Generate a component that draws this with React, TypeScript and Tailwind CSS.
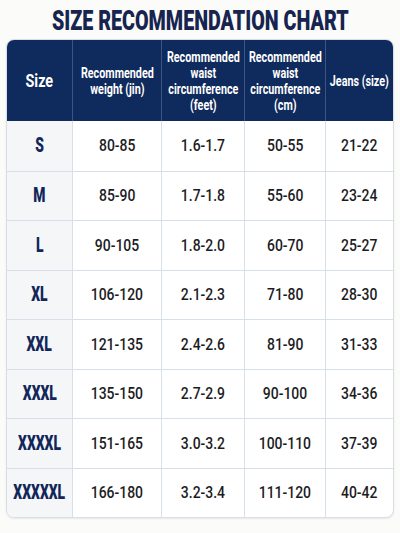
import React from 'react';

const rows = [
  ['S', '80-85', '1.6-1.7', '50-55', '21-22'],
  ['M', '85-90', '1.7-1.8', '55-60', '23-24'],
  ['L', '90-105', '1.8-2.0', '60-70', '25-27'],
  ['XL', '106-120', '2.1-2.3', '71-80', '28-30'],
  ['XXL', '121-135', '2.4-2.6', '81-90', '31-33'],
  ['XXXL', '135-150', '2.7-2.9', '90-100', '34-36'],
  ['XXXXL', '151-165', '3.0-3.2', '100-110', '37-39'],
  ['XXXXXL', '166-180', '3.2-3.4', '111-120', '40-42'],
];

const font = { fontFamily: 'Roboto, "Liberation Sans", sans-serif' };

// header cell text, narrowed the way the condensed face looks
function Head({ lines }: { lines: string[] }) {
  return (
    <div className="flex items-center justify-center text-center border-l border-[#3c5480] min-w-0">
      <span className="inline-block shrink-0 scale-x-[0.77] whitespace-nowrap text-[14px] leading-[16px]">
        {lines.map((l, i) => (
          <span key={i} className="block">{l}</span>
        ))}
      </span>
    </div>
  );
}

const cols = 'grid grid-cols-[65px_89px_83px_81px_minmax(0,1fr)]';

export default function App() {
  return (
    <div className="w-[400px] h-[533px] bg-[#fbfbf9] pt-[6px] px-[6px]" style={font}>
      {/* Title */}
      <div className="h-[33px] flex justify-center">
        <h1 className="inline-block shrink-0 scale-x-[0.73] whitespace-nowrap text-[27px] leading-[30px] font-black text-[#16244f]">
          SIZE RECOMMENDATION CHART
        </h1>
      </div>

      {/* Table */}
      <div className="rounded-lg overflow-hidden border border-[#d9dee6] shadow-[0_1px_2px_rgba(0,0,0,0.08)] bg-white">
        <div className={`${cols} bg-[#0f2a5c] text-white font-bold h-[81px]`}>
          <div className="flex items-center justify-center">
            <span className="inline-block scale-x-[0.8] text-[18px]">Size</span>
          </div>
          <Head lines={['Recommended', 'weight (jin)']} />
          <Head lines={['Recommended', 'waist', 'circumference', '(feet)']} />
          <Head lines={['Recommended', 'waist', 'circumference', '(cm)']} />
          <Head lines={['Jeans (size)']} />
        </div>

        {rows.map((r, i) => (
          <div
            key={r[0]}
            className={`${cols} h-[49.5px] ${i > 0 ? 'border-t border-[#d6dfea]' : ''}`}
          >
            <div className="flex items-center justify-center bg-[#f5f6f8] text-[#12265a] font-black min-w-0">
              <span className="inline-block shrink-0 scale-x-[0.66] whitespace-nowrap text-[21px]">{r[0]}</span>
            </div>
            {r.slice(1).map((v, j) => (
              <div
                key={j}
                className="flex items-center justify-center border-l border-[#d6dfea] text-[#1c1c1f] min-w-0"
              >
                <span className="inline-block shrink-0 scale-x-[0.82] whitespace-nowrap text-[17px] font-medium">{v}</span>
              </div>
            ))}
          </div>
        ))}
      </div>
    </div>
  );
}
